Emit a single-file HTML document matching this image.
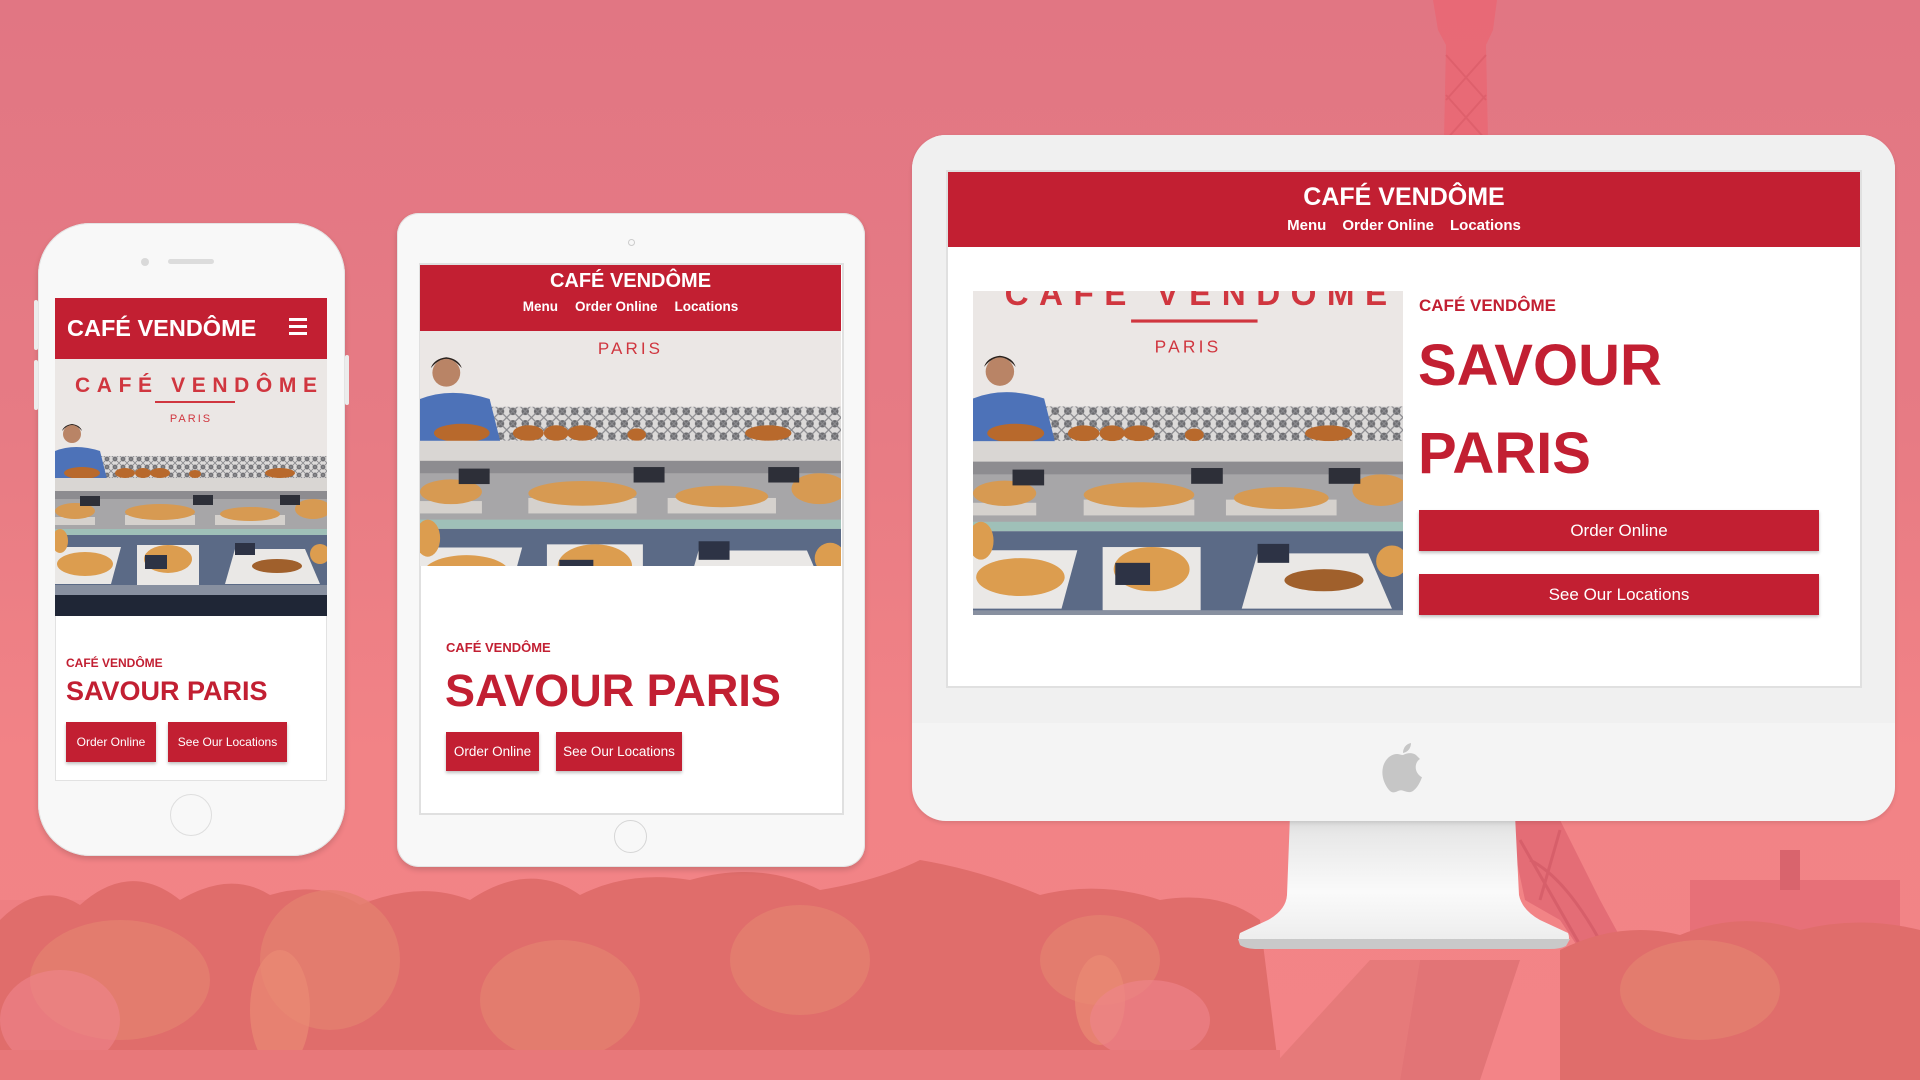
<!DOCTYPE html>
<html><head><meta charset="utf-8"><style>
*{margin:0;padding:0;box-sizing:border-box}
body{width:1920px;height:1080px;overflow:hidden;position:relative;font-family:"Liberation Sans",sans-serif;background:linear-gradient(180deg,#e17683 0%,#e77b84 40%,#f28386 70%,#f38487 100%)}
.abs{position:absolute}
.red{background:#c21f32;color:#fff}
.btn{position:absolute;background:#c21f32;color:#fff;display:flex;align-items:center;justify-content:center;box-shadow:0 2px 3px rgba(0,0,0,.25)}
.photo{position:absolute;overflow:hidden}
.photo svg{width:100%;height:100%;display:block}
</style></head><body>

<svg class="abs" style="left:0;top:0" width="1920" height="1080">
  <path d="M1433 0 L1497 0 L1493 30 L1486 45 L1488 140 L1444 140 L1446 45 L1438 30 Z" fill="#e96874" opacity=".9"/>
  <g stroke="#d95a66" stroke-width="2" opacity=".6"><path d="M1446 55 L1486 100 M1486 55 L1446 100 M1446 95 L1486 140 M1486 95 L1446 140"/></g>
  <path d="M1508 820 L1560 820 L1600 900 L1660 1010 L1620 1010 L1560 920 L1525 900 Z" fill="#e06872" opacity=".8"/>
  <g stroke="#cf5763" stroke-width="3" fill="none" opacity=".6"><path d="M1520 840 L1600 980 M1560 830 L1540 900 M1530 860 Q1570 880 1610 960"/></g>
  <rect x="1690" y="880" width="210" height="60" fill="#e77078"/>
  <rect x="1780" y="850" width="20" height="40" fill="#d9646d"/>
  <rect x="0" y="900" width="760" height="40" fill="#ee7f82"/>
  <path d="M0 920 Q40 880 80 905 Q130 860 180 900 Q230 870 270 895 Q320 880 360 905 Q420 880 470 900 Q530 860 580 895 Q630 870 690 880 Q760 860 820 890 Q880 880 920 860 Q980 870 1040 895 Q1100 880 1160 900 Q1220 890 1260 920 L1280 1080 L0 1080 Z" fill="#e06d6b"/>
  <path d="M1560 950 Q1620 920 1680 935 Q1740 910 1800 930 Q1860 915 1920 930 L1920 1080 L1560 1080 Z" fill="#e06d6b"/>
  <g fill="#e4806f" opacity=".8">
    <ellipse cx="120" cy="980" rx="90" ry="60"/><ellipse cx="330" cy="960" rx="70" ry="70"/>
    <ellipse cx="560" cy="1000" rx="80" ry="60"/><ellipse cx="800" cy="960" rx="70" ry="55"/>
    <ellipse cx="1100" cy="960" rx="60" ry="45"/><ellipse cx="1700" cy="990" rx="80" ry="50"/>
  </g>
  <g fill="#ea8a74" opacity=".7"><ellipse cx="280" cy="1010" rx="30" ry="60"/><ellipse cx="1100" cy="1000" rx="25" ry="45"/></g>
  <g fill="#ee868c" opacity=".6"><ellipse cx="60" cy="1020" rx="60" ry="50"/><ellipse cx="1150" cy="1020" rx="60" ry="40"/></g>
  <path d="M1260 1080 L1370 960 L1420 960 L1400 1080 Z" fill="#e67a7a"/>
  <rect x="0" y="1050" width="1280" height="30" fill="#e8787a"/>
  <path d="M1420 960 L1520 960 L1480 1080 L1400 1080 Z" fill="#e27476"/>
</svg>

<svg width="0" height="0" style="position:absolute">
<defs>
<pattern id="tile" width="8" height="8" patternUnits="userSpaceOnUse"><rect width="8" height="8" fill="#dcdad9"/><circle cx="4" cy="4" r="2.4" fill="#6c6c70"/><path d="M0 0 L8 8 M8 0 L0 8" stroke="#8a8a8e" stroke-width=".8"/></pattern>
<g id="ph">
  <rect width="272" height="257" fill="#e6e2e0"/>
  <rect x="0" y="0" width="272" height="120" fill="#ebe7e5"/>
  <text x="20" y="33" font-family="Liberation Sans,sans-serif" font-weight="bold" font-size="21" fill="#d0363f" textLength="242" lengthAdjust="spacing">CAFÉ VENDÔME</text>
  <rect x="100" y="42" width="80" height="2" fill="#d0363f"/>
  <text x="136" y="63" text-anchor="middle" font-family="Liberation Sans,sans-serif" font-size="11" fill="#d0363f" letter-spacing="2">PARIS</text>
  <rect x="45" y="97" width="227" height="22" fill="url(#tile)"/>
  <path d="M0 92 Q20 84 45 92 L52 120 L0 120 Z" fill="#4d72b8"/>
  <circle cx="17" cy="75" r="9" fill="#b98466"/>
  <path d="M7 72 Q17 60 27 72 Q25 66 17 65 Q9 66 7 72Z" fill="#2b211c"/>
  <g fill="#b8692c"><ellipse cx="27" cy="114" rx="18" ry="6"/><ellipse cx="70" cy="114" rx="10" ry="5"/><ellipse cx="88" cy="114" rx="8" ry="5"/><ellipse cx="105" cy="114" rx="10" ry="5"/><ellipse cx="140" cy="115" rx="6" ry="4"/><ellipse cx="225" cy="114" rx="15" ry="5"/></g>
  <rect x="0" y="119" width="272" height="13" fill="#d9d6d3"/>
  <rect x="0" y="132" width="272" height="42" fill="#a7a6a8"/>
  <rect x="0" y="132" width="272" height="8" fill="#8d8c90"/>
  <g fill="#d5d1cd"><rect x="0" y="158" width="40" height="8"/><rect x="70" y="156" width="70" height="10"/><rect x="160" y="156" width="70" height="10"/></g>
  <g fill="#d79a52"><ellipse cx="20" cy="152" rx="20" ry="8"/><ellipse cx="105" cy="153" rx="35" ry="8"/><ellipse cx="195" cy="155" rx="30" ry="7"/><ellipse cx="258" cy="150" rx="18" ry="10"/></g>
  <g fill="#2d2f38"><rect x="25" y="137" width="20" height="10"/><rect x="138" y="136" width="20" height="10"/><rect x="225" y="136" width="20" height="10"/></g>
  <rect x="0" y="170" width="272" height="6" fill="#9fc0b8"/>
  <rect x="0" y="176" width="272" height="66" fill="#5b6a86"/>
  <path d="M0 188 L66 188 L56 225 L0 225Z" fill="#eae8e6"/>
  <rect x="82" y="186" width="62" height="40" fill="#eae8e6"/>
  <path d="M180 190 L250 190 L265 225 L170 225Z" fill="#eae8e6"/>
  <g fill="#dc9d4f"><ellipse cx="30" cy="205" rx="28" ry="12"/><ellipse cx="113" cy="200" rx="24" ry="14"/><ellipse cx="222" cy="207" rx="25" ry="7" fill="#a0602c"/><ellipse cx="265" cy="195" rx="10" ry="10"/><ellipse cx="5" cy="182" rx="8" ry="12"/></g>
  <g fill="#2d3345"><rect x="90" y="196" width="22" height="14"/><rect x="180" y="184" width="20" height="12"/></g>
  <rect x="0" y="226" width="272" height="10" fill="#8890a0"/>
  <rect x="0" y="236" width="272" height="21" fill="#1f2636"/>
</g>
</defs></svg>

<!-- PHONE -->
<div class="abs" style="left:38px;top:223px;width:307px;height:633px;background:#f8f8f8;border-radius:52px;box-shadow:0 3px 6px rgba(0,0,0,.15),inset 0 0 0 1px #e4e4e4"></div>
<div class="abs" style="left:34px;top:300px;width:4px;height:50px;background:#ececec;border-radius:2px"></div>
<div class="abs" style="left:34px;top:360px;width:4px;height:50px;background:#ececec;border-radius:2px"></div>
<div class="abs" style="left:345px;top:355px;width:4px;height:50px;background:#ececec;border-radius:2px"></div>
<div class="abs" style="left:141px;top:258px;width:8px;height:8px;border-radius:50%;background:#d9d9d9"></div>
<div class="abs" style="left:168px;top:259px;width:46px;height:5px;border-radius:3px;background:#dcdcdc"></div>
<div class="abs" style="left:55px;top:298px;width:272px;height:483px;background:#fff;border:1px solid #e2e2e2"></div>
<div class="abs red" style="left:55px;top:298px;width:272px;height:61px"></div>
<div class="abs" style="left:67px;top:315px;color:#fff;font-weight:bold;font-size:23.5px">CAFÉ VENDÔME</div>
<div class="abs" style="left:289px;top:318px;width:18px">
  <div style="height:3px;background:#fff;margin-bottom:4px"></div><div style="height:3px;background:#fff;margin-bottom:4px"></div><div style="height:3px;background:#fff"></div></div>
<div class="photo" style="left:55px;top:359px;width:272px;height:257px"><svg viewBox="0 0 272 257" preserveAspectRatio="none"><use href="#ph"/></svg></div>
<div class="abs" style="left:66px;top:656px;color:#c21f32;font-weight:bold;font-size:12px">CAFÉ VENDÔME</div>
<div class="abs" style="left:66px;top:676px;color:#c21f32;font-weight:bold;font-size:27px">SAVOUR PARIS</div>
<div class="btn" style="left:66px;top:722px;width:90px;height:40px;font-size:12px">Order Online</div>
<div class="btn" style="left:168px;top:722px;width:119px;height:40px;font-size:12px">See Our Locations</div>
<div class="abs" style="left:170px;top:794px;width:42px;height:42px;border-radius:50%;border:1.5px solid #dedede"></div>

<!-- TABLET -->
<div class="abs" style="left:397px;top:213px;width:468px;height:654px;background:#f8f8f8;border-radius:22px;box-shadow:0 3px 6px rgba(0,0,0,.15),inset 0 0 0 1px #e4e4e4"></div>
<div class="abs" style="left:628px;top:239px;width:7px;height:7px;border-radius:50%;border:1px solid #ccc"></div>
<div class="abs" style="left:419px;top:263px;width:425px;height:552px;background:#fff;border:2px solid #e0e0e0"></div>
<div class="abs red" style="left:420px;top:265px;width:421px;height:66px;text-align:center">
  <div style="font-weight:bold;font-size:20px;margin-top:5px">CAFÉ VENDÔME</div>
  <div style="font-weight:bold;font-size:13.5px;margin-top:6px"><span style="margin-right:17px">Menu</span><span style="margin-right:17px">Order Online</span><span>Locations</span></div>
</div>
<div class="photo" style="left:420px;top:331px;width:421px;height:235px"><svg viewBox="0 48 272 152" preserveAspectRatio="none"><use href="#ph"/></svg></div>
<div class="abs" style="left:446px;top:640px;color:#c21f32;font-weight:bold;font-size:13px">CAFÉ VENDÔME</div>
<div class="abs" style="left:445px;top:665px;color:#c21f32;font-weight:bold;font-size:45px">SAVOUR PARIS</div>
<div class="btn" style="left:446px;top:732px;width:93px;height:39px;font-size:13.5px">Order Online</div>
<div class="btn" style="left:556px;top:732px;width:126px;height:39px;font-size:13.5px">See Our Locations</div>
<div class="abs" style="left:614px;top:820px;width:33px;height:33px;border-radius:50%;border:1.5px solid #d6d6d6"></div>

<!-- IMAC -->
<svg class="abs" style="left:1230px;top:815px" width="350" height="135">
  <defs><linearGradient id="st" x1="0" y1="0" x2="0" y2="1"><stop offset="0" stop-color="#d8d8d8"/><stop offset=".15" stop-color="#e8e8e8"/><stop offset=".6" stop-color="#fafafa"/><stop offset="1" stop-color="#ececec"/></linearGradient></defs>
  <path d="M60 0 L285 0 L289 80 Q292 95 310 105 L338 118 Q342 128 330 129 L18 129 Q6 128 10 118 L38 105 Q56 95 57 80 Z" fill="url(#st)"/>
  <path d="M8 124 L340 124 L336 131 Q330 134 320 134 L28 134 Q16 134 10 130Z" fill="#c9c9c9"/>
</svg>
<div class="abs" style="left:912px;top:135px;width:983px;height:686px;background:#f4f4f4;border-radius:34px;overflow:hidden;box-shadow:0 2px 4px rgba(0,0,0,.1)">
  <div style="height:588px;background:#f0f0f0"></div>
</div>
<svg class="abs" style="left:1382px;top:742px" width="42" height="52" viewBox="0 0 42 52">
  <path d="M21 13 C25 11 30 10 34 13 C36 15 37 16 38 17 C33 20 32 28 37 33 C38 34 39 35 40 35 C38 41 35 46 31 49 C28 51 25 50 22 49 C20 48 18 48 16 49 C12 51 10 51 7 48 C2 42 -1 33 1 25 C3 17 9 12 15 12 C17 12 19 13 21 13 Z" fill="#c6c6c6"/>
  <path d="M21 11 C21 6 24 2 29 1 C29 6 26 10 21 11 Z" fill="#c6c6c6"/>
</svg>
<div class="abs" style="left:946px;top:170px;width:916px;height:518px;background:#fff;border:2px solid #e0e0e0"></div>
<div class="abs red" style="left:948px;top:172px;width:912px;height:75px;text-align:center">
  <div style="font-weight:bold;font-size:25px;margin-top:11px">CAFÉ VENDÔME</div>
  <div style="font-weight:bold;font-size:15px;margin-top:5px"><span style="margin-right:16px">Menu</span><span style="margin-right:16px">Order Online</span><span>Locations</span></div>
</div>
<div class="photo" style="left:973px;top:291px;width:430px;height:324px"><svg viewBox="0 24 272 205" preserveAspectRatio="none"><use href="#ph"/></svg></div>
<div class="abs" style="left:1419px;top:296px;color:#c21f32;font-weight:bold;font-size:17px">CAFÉ VENDÔME</div>
<div class="abs" style="left:1418px;top:322px;color:#c21f32;font-weight:bold;font-size:58px;line-height:88px">SAVOUR<br>PARIS</div>
<div class="btn" style="left:1419px;top:510px;width:400px;height:41px;font-size:17px">Order Online</div>
<div class="btn" style="left:1419px;top:574px;width:400px;height:41px;font-size:17px">See Our Locations</div>

</body></html>
